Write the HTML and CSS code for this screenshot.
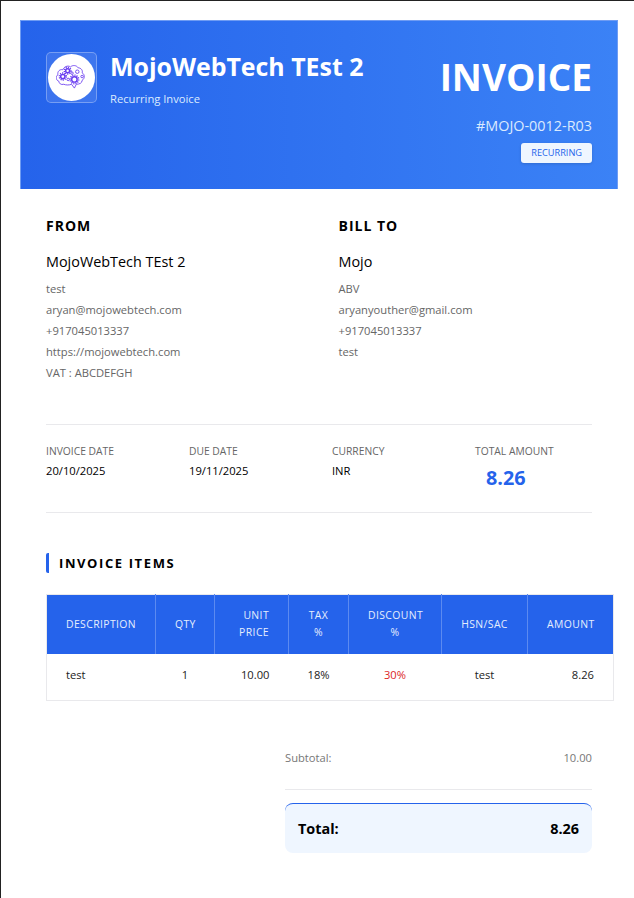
FILE: index.html
```html
<!DOCTYPE html>
<html lang="en">
<head>
<meta charset="utf-8">
<title>Invoice</title>
<link rel="stylesheet" href="styles.css">
</head>
<body>
<div class="page">
  <header class="hero">
    <div class="brand">
      <div class="logo-box">
        <div class="logo-circle">
          <svg class="brain" viewBox="0 0 32 28" fill="none" stroke="#6a3df0" stroke-width="0.9">
            <path d="M8 21c-3 1-5-1-5-3-3-1-4-5-1-7-1-3 2-6 5-5 1-3 5-5 8-3 2-2 6-2 8 1 3 0 5 3 4 5 3 2 3 6 0 8 0 3-3 4-6 4l-2 4-3-4c-2 1-6 1-8 0z"/>
            <g stroke-width="1.500"><circle cx="12" cy="7" r="2"/><circle cx="7" cy="13" r="2.200"/><circle cx="19" cy="16" r="2.800"/></g>
            <g stroke-width="1.800" stroke-dasharray="1.100 1.100"><circle cx="12" cy="7" r="3.300"/><circle cx="7" cy="13" r="3.500"/><circle cx="19" cy="16" r="4.300"/></g>
            <circle cx="22" cy="8" r="1.800"/><circle cx="16.500" cy="9.500" r="1.300"/><circle cx="12.500" cy="16" r="1.300"/><circle cx="27" cy="13" r="1.300"/>
          </svg>
        </div>
      </div>
      <div class="brand-text">
        <h1 class="brand-name">MojoWebTech TEst 2</h1>
        <p class="brand-sub">Recurring Invoice</p>
      </div>
    </div>
    <div class="hero-right">
      <div class="invoice-word">INVOICE</div>
      <div class="invoice-num">#MOJO-0012-R03</div>
      <span class="badge">RECURRING</span>
    </div>
  </header>

  <main class="content">
    <section class="parties">
      <div class="party">
        <h2 class="party-label">FROM</h2>
        <div class="party-name">MojoWebTech TEst 2</div>
        <div class="party-line">test</div>
        <div class="party-line">aryan@mojowebtech.com</div>
        <div class="party-line">+917045013337</div>
        <div class="party-line">https://mojowebtech.com</div>
        <div class="party-line">VAT : ABCDEFGH</div>
      </div>
      <div class="party">
        <h2 class="party-label">BILL TO</h2>
        <div class="party-name">Mojo</div>
        <div class="party-line">ABV</div>
        <div class="party-line">aryanyouther@gmail.com</div>
        <div class="party-line">+917045013337</div>
        <div class="party-line">test</div>
      </div>
    </section>

    <section class="meta">
      <div><div class="meta-label">INVOICE DATE</div><div class="meta-value">20/10/2025</div></div>
      <div><div class="meta-label">DUE DATE</div><div class="meta-value">19/11/2025</div></div>
      <div><div class="meta-label">CURRENCY</div><div class="meta-value">INR</div></div>
      <div><div class="meta-label">TOTAL AMOUNT</div><div class="meta-total">8.26</div></div>
    </section>

    <h2 class="items-title">INVOICE ITEMS</h2>

    <table class="items">
      <thead>
        <tr>
          <th class="c-desc left">DESCRIPTION</th>
          <th class="c-qty">QTY</th>
          <th class="c-price right">UNIT<br>PRICE</th>
          <th class="c-tax">TAX<br>%</th>
          <th class="c-disc">DISCOUNT<br>%</th>
          <th class="c-hsn">HSN/SAC</th>
          <th class="c-amt right">AMOUNT</th>
        </tr>
      </thead>
      <tbody>
        <tr>
          <td class="left">test</td>
          <td>1</td>
          <td class="right">10.00</td>
          <td>18%</td>
          <td class="red">30%</td>
          <td>test</td>
          <td class="right">8.26</td>
        </tr>
      </tbody>
    </table>

    <section class="totals">
      <div class="sub-row"><span>Subtotal:</span><span>10.00</span></div>
      <div class="total-box"><span>Total:</span><span>8.26</span></div>
    </section>
  </main>
</div>
</body>
</html>
```
FILE: styles.css
```css
* { box-sizing: border-box; }
html, body { margin: 0; padding: 0; background: #fff; }
body { font-family: "Open Sans", "Noto Sans", sans-serif; color: #000; overflow: hidden; height: 898px; }
.page { width: 634px; height: 898px; border-top: 1px solid #222; border-left: 1px solid #222; padding: 19px 0 0 19px; }

.hero { width: 598px; height: 169px; background: linear-gradient(90deg, #2563eb, #3b82f6); border: 1px solid #6f9cf3; border-bottom: 0; padding: 31px 25px 0 25px; display: flex; justify-content: space-between; align-items: flex-start; color: #fff; }
.brand { display: flex; gap: 13px; align-items: flex-start; }
.logo-box { width: 51px; height: 51px; border: 1px solid rgba(255,255,255,.3); border-radius: 5px; background: rgba(255,255,255,.1); display: flex; align-items: center; justify-content: center; }
.logo-circle { width: 47px; height: 47px; border-radius: 50%; background: #fff; display: flex; align-items: center; justify-content: center; }
.brain { width: 31px; height: 27px; }
.brand-name { margin: -1px 0 0; font-size: 24.9px; line-height: 30px; font-weight: 700; }
.brand-sub { margin: 10px 0 0; font-size: 11.2px; line-height: 15px; color: #dbeafe; }
.hero-right { display: flex; flex-direction: column; align-items: flex-end; }
.invoice-word { font-size: 37px; line-height: 52px; font-weight: 700; margin-top: -1px; }
.invoice-num { font-size: 14.4px; line-height: 19px; color: #dbeafe; margin-top: 13px; }
.badge { margin-top: 8px; background: #eff6ff; color: #2563eb; font-size: 9.2px; line-height: 12px; padding: 4px 10px; border-radius: 3px; box-shadow: 0 1px 3px rgba(0,0,0,.15); height: 20px; }

.content { width: 546px; margin-left: 26px; }
.parties { display: grid; grid-template-columns: 292.500px 1fr; padding-top: 27px; height: 236px; border-bottom: 1px solid #e9e9ec; }
.party-label { margin: 0; font-size: 14px; line-height: 19px; font-weight: 700; letter-spacing: 1px; }
.party-name { font-size: 14.4px; line-height: 19px; margin: 17px 0 7px; }
.party-line { font-size: 11.2px; line-height: 21px; color: #666; }

.meta { display: grid; grid-template-columns: repeat(4, 143px); height: 88px; padding-top: 19px; border-bottom: 1px solid #e9e9ec; }
.meta-label { font-size: 10.3px; line-height: 14px; color: #666; }
.meta-value { font-size: 11.2px; line-height: 15px; margin-top: 5px; }
.meta-total { font-size: 19.8px; line-height: 27px; font-weight: 700; color: #2563eb; margin: 6px 0 0 11px; }

.items-title { margin: 40px 0 0; height: 20px; border-left: 3px solid #2563eb; border-radius: 2px; padding-left: 10px; font-size: 13px; line-height: 20px; font-weight: 700; letter-spacing: 1.6px; }

.items { margin-top: 21px; width: 567px; table-layout: fixed; border-collapse: collapse; border: 1px solid #e9e9ec; font-size: 11.2px; }
.items th { background: #2563eb; color: #e6eefd; font-weight: 400; font-size: 10.4px; letter-spacing: .4px; line-height: 17px; height: 59px; padding: 0 19px; text-align: center; border-right: 1px solid #5c8af0; }
.items th:last-child { border-right: 0; }
.items td { height: 47px; padding: 0 19px 4px; text-align: center; color: #222; }
.items th.left, .items td.left { text-align: left; }
.items th.right, .items td.right { text-align: right; }
.items td.red { color: #dc2626; }
.c-desc { width: 109px; }
.c-qty { width: 59px; }
.c-price { width: 74px; }
.c-tax { width: 60px; }
.c-disc { width: 93px; }
.c-hsn { width: 86px; }
.c-amt { width: 86px; }

.totals { width: 307px; margin: 49px 0 0 239px; }
.sub-row { display: flex; justify-content: space-between; font-size: 11.2px; line-height: 16px; color: #777; height: 40px; border-bottom: 1px solid #e9e9ec; }
.total-box { margin-top: 13px; height: 50px; display: flex; justify-content: space-between; align-items: center; padding: 0 13px; background: #eff6ff; border-top: 1px solid #2563eb; border-radius: 8px; font-size: 14.4px; font-weight: 700; }
```
